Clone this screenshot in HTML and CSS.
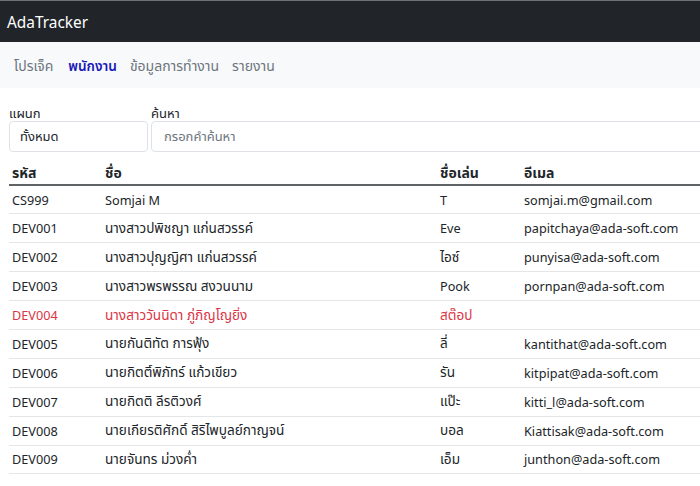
FILE: index.html
```html
<!DOCTYPE html>
<html lang="th">
<head>
<meta charset="utf-8">
<title>AdaTracker</title>
<link rel="stylesheet" href="styles.css">
</head>
<body>
<header class="topbar"><span class="brand">AdaTracker</span></header>
<nav class="subnav">
  <a class="nav-link first">โปรเจ็ค</a>
  <a class="nav-link active">พนักงาน</a>
  <a class="nav-link">ข้อมูลการทำงาน</a>
  <a class="nav-link">รายงาน</a>
</nav>
<main class="content">
  <div class="filters">
    <div class="field dept">
      <label class="label">แผนก</label>
      <div class="input select">ทั้งหมด</div>
    </div>
    <div class="field search">
      <label class="label">ค้นหา</label>
      <div class="input placeholder">กรอกคำค้นหา</div>
    </div>
  </div>
  <table class="grid">
    <thead>
      <tr><th class="c-id">รหัส</th><th class="c-name">ชื่อ</th><th class="c-nick">ชื่อเล่น</th><th class="c-mail">อีเมล</th></tr>
    </thead>
    <tbody>
      <tr><td>CS999</td><td>Somjai M</td><td>T</td><td>somjai.m@gmail.com</td></tr>
      <tr><td>DEV001</td><td class="th">นางสาวปพิชญา แก่นสวรรค์</td><td>Eve</td><td>papitchaya@ada-soft.com</td></tr>
      <tr><td>DEV002</td><td class="th">นางสาวปุญญิศา แก่นสวรรค์</td><td class="th">ไอซ์</td><td>punyisa@ada-soft.com</td></tr>
      <tr><td>DEV003</td><td class="th">นางสาวพรพรรณ สงวนนาม</td><td>Pook</td><td>pornpan@ada-soft.com</td></tr>
      <tr class="inactive"><td>DEV004</td><td class="th">นางสาววันนิดา ภู่ภิญโญยิ่ง</td><td class="th">สต๊อป</td><td></td></tr>
      <tr><td>DEV005</td><td class="th">นายกันติทัต การฟุ้ง</td><td class="th">ลี่</td><td>kantithat@ada-soft.com</td></tr>
      <tr><td>DEV006</td><td class="th">นายกิตติ์พิภัทร์ แก้วเขียว</td><td class="th">รัน</td><td>kitpipat@ada-soft.com</td></tr>
      <tr><td>DEV007</td><td class="th">นายกิตติ ลีรติวงศ์</td><td class="th">แป๊ะ</td><td>kitti_l@ada-soft.com</td></tr>
      <tr><td>DEV008</td><td class="th">นายเกียรติศักดิ์ สิริไพบูลย์กาญจน์</td><td class="th">บอล</td><td>Kiattisak@ada-soft.com</td></tr>
      <tr><td>DEV009</td><td class="th">นายจันทร ม่วงค่ำ</td><td class="th">เอ็ม</td><td>junthon@ada-soft.com</td></tr>
    </tbody>
  </table>
</main>
</body>
</html>
```
FILE: styles.css
```css
* { box-sizing: border-box; }
html, body { margin: 0; padding: 0; }
body {
  width: 700px;
  overflow: hidden;
  font-family: "Noto Sans", "Noto Sans Thai", "Open Sans", sans-serif;
  font-size: 14px;
  color: #212529;
  background: #fff;
  border-top: 1px solid #6c7278;
}
.topbar {
  height: 41px;
  background: #212529;
  display: flex;
  align-items: center;
  padding: 2px 7px 0;
}
.brand {
  color: #fff;
  font-size: 15.4px;
  line-height: 1;
}
.subnav {
  height: 46px;
  background: #f8f9fa;
  display: flex;
  align-items: center;
  gap: 13px;
  padding: 2px 14px 0;
}
.nav-link {
  color: #6c757d;
  font-size: 14px;
}
.nav-link.first { padding-right: 2px; }
.nav-link.active {
  color: #1a1ab8;
  font-weight: 600;
  font-size: 13.6px;
}
.content {
  padding: 17px 0 0 9px;
  width: 760px;
}
.filters {
  display: flex;
  gap: 3px;
}
.field { display: flex; flex-direction: column; }
.dept { width: 139px; }
.search { flex: 1; }
.label {
  font-size: 13px;
  line-height: 16px;
  color: #212529;
}
.input {
  height: 31px;
  border: 1px solid #dee2e6;
  border-radius: 4px;
  padding: 0 10px;
  display: flex;
  align-items: center;
  font-size: 13px;
}
.select { padding-left: 10px; color: #212529; }
.placeholder { color: #6c757d; padding-left: 12px; }
.grid {
  margin-top: 11px;
  border-collapse: collapse;
  width: 751px;
  table-layout: fixed;
}
.grid th, .grid td {
  text-align: left;
  padding: 0 3px;
  white-space: nowrap;
}
.grid th {
  font-weight: 700;
  font-size: 14px;
  height: 22px;
  vertical-align: middle;
  border-bottom: 2px solid #5f6366;
}
.grid td {
  font-size: 12.7px;
  height: 28.9px;
  border-bottom: 1px solid #e4e6e8;
}
.grid td.th { font-size: 13.6px; }
.c-id { width: 93px; }
.c-name { width: 335px; }
.c-nick { width: 84px; }
.c-mail { width: auto; }
.inactive td { color: #dc3545; }
```
